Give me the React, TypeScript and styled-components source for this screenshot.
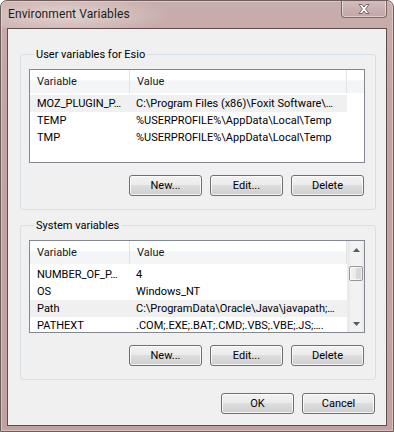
import React from 'react';
import styled, { createGlobalStyle } from 'styled-components';

const UI_FONT = "Roboto, 'Noto Sans', sans-serif";

const GlobalStyle = createGlobalStyle`
  html, body {
    margin: 0;
    padding: 0;
    background: #ffffff;
  }
  * {
    box-sizing: border-box;
  }
`;

const Window = styled.div`
  width: 394px;
  height: 432px;
  display: flex;
  flex-direction: column;
  background: linear-gradient(180deg, #c7adab 0%, #c2a4a2 30%, #c0a2a0 100%);
  border: 1px solid #6f5c5c;
  border-radius: 7px 7px 0 0;
  box-shadow: inset 0 0 0 1px rgba(255, 255, 255, 0.35);
  font-family: ${UI_FONT};
  font-size: 11px;
  color: #000;
  overflow: hidden;
`;

const TitleBar = styled.div`
  height: 27px;
  display: flex;
  align-items: flex-start;
  justify-content: space-between;
  padding: 0 6px 0 7px;
  background: radial-gradient(ellipse 110px 22px at 62px 14px, rgba(236, 224, 222, 0.75), rgba(236, 224, 222, 0) 100%);
`;

const Title = styled.div`
  font-size: 12px;
  line-height: 27px;
  color: #1c1c1c;
  letter-spacing: 0.1px;
`;

const CloseButton = styled.div`
  width: 46px;
  height: 18px;
  margin-top: -1px;
  display: flex;
  align-items: center;
  justify-content: center;
  border: 1px solid #7a6767;
  border-top: none;
  border-radius: 0 0 4px 4px;
  background: linear-gradient(180deg, #d5bfbd 0%, #c9b1af 50%, #c1a7a5 100%);
  box-shadow: inset 0 0 0 1px rgba(255, 255, 255, 0.45);
`;

const Client = styled.div`
  flex: 1;
  margin: 0 6px 5px 6px;
  border: 1px solid #5f4d4d;
  background: #f0f0f0;
  padding: 18px 10px 0 12px;
  display: flex;
  flex-direction: column;
`;

const GroupBox = styled.fieldset`
  margin: 0 0 ${(p: { $gap: number }) => p.$gap}px 0;
  padding: 7px 10px 13px 8px;
  min-width: 0;
  border: 1px solid #d5dfe5;
  border-radius: 3px;
  display: flex;
  flex-direction: column;
  gap: 12px;
`;

const Legend = styled.legend`
  margin-left: 5px;
  padding: 0 2px;
  line-height: 15px;
  font-size: 11px;
`;

const ListView = styled.div`
  height: ${(p: { $height: number }) => p.$height}px;
  border: 1px solid #828790;
  background: #ffffff;
  display: flex;
  overflow: hidden;
`;

const ListBody = styled.div`
  flex: 1;
  min-width: 0;
  display: flex;
  flex-direction: column;
`;

const HeaderRow = styled.div`
  height: 24px;
  display: grid;
  grid-template-columns: 100px 217px 1fr;
  background: linear-gradient(180deg, #ffffff 0%, #ffffff 45%, #f4f5f7 46%, #f4f5f7 100%);
  border-bottom: 1px solid #ffffff;
  margin-bottom: 1px;
`;

const HeaderCell = styled.div`
  padding-left: 7px;
  line-height: 24px;
  color: #1a1a1a;
  border-right: 1px solid #e1e3e6;
  white-space: nowrap;
  overflow: hidden;
`;

const Row = styled.div`
  height: 17px;
  display: grid;
  grid-template-columns: 100px 217px;
  background: ${(p: { $hot?: boolean }) => (p.$hot ? '#f0f0f0' : 'transparent')};
  width: 317px;
`;

const Cell = styled.div`
  padding-left: ${(p: { $first?: boolean }) => (p.$first ? '7px' : '6px')};
  line-height: 17px;
  white-space: nowrap;
  overflow: hidden;
  color: #000;
`;

const ScrollBar = styled.div`
  width: 17px;
  display: flex;
  flex-direction: column;
  background: linear-gradient(90deg, #e7e7e7 0%, #f2f2f2 20%, #f2f2f2 80%, #e9e9e9 100%);
  border-left: 1px solid #ececec;
`;

const ScrollArrow = styled.div`
  height: 17px;
  display: flex;
  align-items: center;
  justify-content: center;
`;

const ScrollTrack = styled.div`
  flex: 1;
  padding-top: 8px;
`;

const ScrollThumb = styled.div`
  height: 15px;
  margin: 0 1px;
  border: 1px solid #979797;
  border-radius: 2px;
  background: linear-gradient(90deg, #f4f4f4 0%, #eaeaea 50%, #dadada 51%, #d4d4d4 100%);
  box-shadow: inset 0 0 0 1px rgba(255, 255, 255, 0.7);
`;

const ButtonRow = styled.div`
  display: flex;
  justify-content: flex-end;
  gap: 8px;
  padding-right: ${(p: { $pad: number }) => p.$pad}px;
`;

const Button = styled.button`
  width: 73px;
  height: 21px;
  padding: 0;
  border: 1px solid #707070;
  border-radius: 3px;
  background: linear-gradient(180deg, #f2f2f2 0%, #ebebeb 48%, #dddddd 50%, #cfcfcf 100%);
  box-shadow: inset 0 0 0 1px rgba(255, 255, 255, 0.75);
  font-family: ${UI_FONT};
  font-size: 11px;
  color: #000;
  line-height: 19px;
`;

type Variable = { name: string; value: string; hot?: boolean };

const userVars: Variable[] = [
  { name: 'MOZ_PLUGIN_P…', value: 'C:\\Program Files (x86)\\Foxit Software\\…', hot: true },
  { name: 'TEMP', value: '%USERPROFILE%\\AppData\\Local\\Temp' },
  { name: 'TMP', value: '%USERPROFILE%\\AppData\\Local\\Temp' },
];

const systemVars: Variable[] = [
  { name: 'NUMBER_OF_P…', value: '4' },
  { name: 'OS', value: 'Windows_NT' },
  { name: 'Path', value: 'C:\\ProgramData\\Oracle\\Java\\javapath;…', hot: true },
  { name: 'PATHEXT', value: '.COM;.EXE;.BAT;.CMD;.VBS;.VBE;.JS;….' },
];

const CloseGlyph = () => (
  <svg width="14" height="12" viewBox="0 0 14 12">
    <path
      d="M2 1.5 L5 1.5 L7 4 L9 1.5 L12 1.5 L8.6 6 L12 10.5 L9 10.5 L7 8 L5 10.5 L2 10.5 L5.4 6 Z"
      fill="#ffffff"
      stroke="#6a5a5a"
      strokeWidth="0.9"
      strokeLinejoin="round"
    />
  </svg>
);

const Arrow = ({ up }: { up?: boolean }) => (
  <svg width="7" height="4" viewBox="0 0 7 4">
    <path d={up ? 'M0 4 L3.5 0 L7 4 Z' : 'M0 0 L3.5 4 L7 0 Z'} fill="#5a5a5a" />
  </svg>
);

const VariableList = ({ rows, scroll, height }: { rows: Variable[]; scroll?: boolean; height: number }) => (
  <ListView $height={height}>
    <ListBody>
      <HeaderRow>
        <HeaderCell>Variable</HeaderCell>
        <HeaderCell>Value</HeaderCell>
        <HeaderCell style={{ borderRight: 'none' }} />
      </HeaderRow>
      {rows.map((r) => (
        <Row key={r.name} $hot={r.hot}>
          <Cell $first>{r.name}</Cell>
          <Cell>{r.value}</Cell>
        </Row>
      ))}
    </ListBody>
    {scroll && (
      <ScrollBar>
        <ScrollArrow>
          <Arrow up />
        </ScrollArrow>
        <ScrollTrack>
          <ScrollThumb />
        </ScrollTrack>
        <ScrollArrow>
          <Arrow />
        </ScrollArrow>
      </ScrollBar>
    )}
  </ListView>
);

const EnvironmentVariables: React.FC = () => {
  return (
    <>
      <GlobalStyle />
      <Window>
        <TitleBar>
          <Title>Environment Variables</Title>
          <CloseButton>
            <CloseGlyph />
          </CloseButton>
        </TitleBar>
        <Client>
          <GroupBox $gap={8}>
            <Legend>User variables for Esio</Legend>
            <VariableList rows={userVars} height={94} />
            <ButtonRow $pad={1}>
              <Button>New...</Button>
              <Button>Edit...</Button>
              <Button>Delete</Button>
            </ButtonRow>
          </GroupBox>
          <GroupBox $gap={13}>
            <Legend>System variables</Legend>
            <VariableList rows={systemVars} height={93} scroll />
            <ButtonRow $pad={1}>
              <Button>New...</Button>
              <Button>Edit...</Button>
              <Button>Delete</Button>
            </ButtonRow>
          </GroupBox>
          <ButtonRow $pad={1}>
            <Button>OK</Button>
            <Button>Cancel</Button>
          </ButtonRow>
        </Client>
      </Window>
    </>
  );
};

export default EnvironmentVariables;
